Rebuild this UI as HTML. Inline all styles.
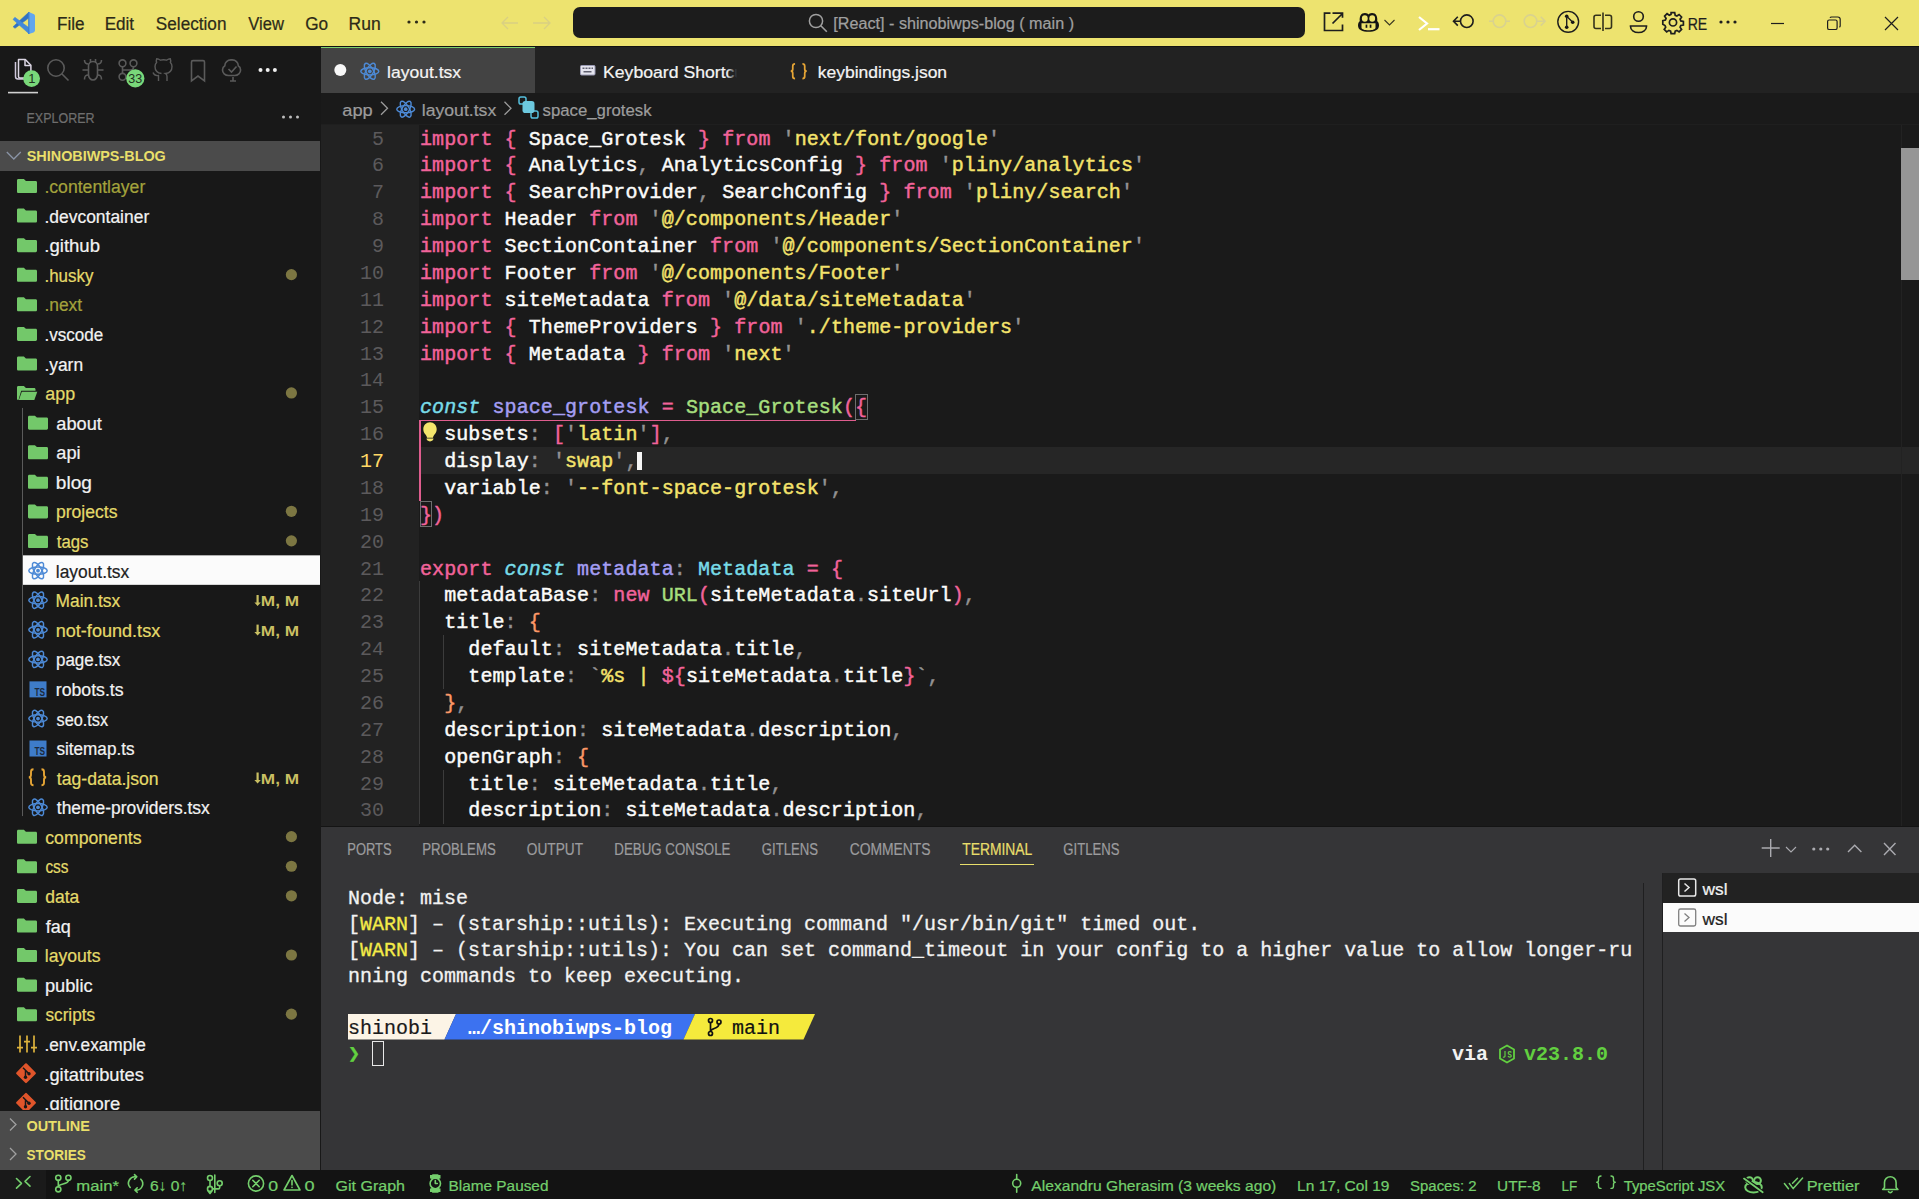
<!DOCTYPE html>
<html><head><meta charset="utf-8"><style>
*{margin:0;padding:0;box-sizing:border-box}
html,body{width:1919px;height:1199px;overflow:hidden;background:#1b1b1b;font-family:"Liberation Sans",sans-serif}
.abs{position:absolute}
svg{overflow:visible}
.ln{position:absolute;left:0;width:62px;text-align:right;font-family:"Liberation Mono",monospace;font-size:20px;color:#5e5c5e;height:27px;line-height:27px}
.cl{position:absolute;left:99px;font-family:"Liberation Mono",monospace;font-size:20px;height:27px;line-height:27px;white-space:pre;color:#fcfcfa;letter-spacing:0.08px;-webkit-text-stroke:0.45px currentColor}
.k{color:#f2639a}.p{color:#939293}.s{color:#f4e36c}.w{color:#fcfcfa}.c{color:#78dce8;font-style:italic}.v{color:#a49ef3}.g{color:#a6de7e}.t{color:#78dce8}.o{color:#fc9867}
.term{position:absolute;left:348px;font-family:"Liberation Mono",monospace;font-size:20px;height:26px;line-height:26px;white-space:pre;color:#f2f2f2;-webkit-text-stroke:0.3px currentColor}
</style></head><body>
<div class="abs" style="left:0px;top:0px;width:1919px;height:46px;background:#ede36f;"></div>
<svg class="abs" style="left:0;top:0" width="46" height="46" viewBox="0 0 46 46">
<path d="M29 12L29 17.8L15 28.3L13.1 26.7z" fill="#2f72c4" stroke="#2f72c4" stroke-width=".6" stroke-linejoin="round"/>
<path d="M14.9 17.3L29 27.8V33.8L13 19.4z" fill="#4389d9" stroke="#4389d9" stroke-width=".6" stroke-linejoin="round"/>
<path d="M28.8 11.9L33.5 13.9C34.4 14.3 35 15 35 16V30.3C35 31.3 34.4 32 33.5 32.4L28.8 34V27.8z" fill="#62a6ee"/>
<path d="M28.8 11.9V34" stroke="#3b7fce" stroke-width="1.2"/>
</svg>
<svg class="abs" style="left:405px;top:18px" width="24" height="8"><g fill="#2c2a18"><circle cx="4" cy="4" r="1.6"/><circle cx="11.5" cy="4" r="1.6"/><circle cx="19" cy="4" r="1.6"/></g></svg>
<svg class="abs" style="left:498px;top:12px" width="60" height="22" viewBox="0 0 60 22">
<path d="M20 11H4M10 5L4 11l6 6" stroke="#d9d083" stroke-width="1.3" fill="none"/>
<path d="M35 11h17M46 5l6 6-6 6" stroke="#d9d083" stroke-width="1.3" fill="none"/>
</svg>
<div class="abs" style="left:573px;top:7px;width:732px;height:31px;background:#1c1c1c;border-radius:7px"></div>
<svg class="abs" style="left:806px;top:12px" width="24" height="22" viewBox="0 0 24 22">
<circle cx="10" cy="9" r="6.6" stroke="#a0a0a0" stroke-width="1.5" fill="none"/><path d="M14.8 13.8l6 6" stroke="#a0a0a0" stroke-width="1.6"/></svg>
<svg class="abs" style="left:0;top:0" width="1919" height="46" viewBox="0 0 1919 46">
<g stroke="#1e1e1e" stroke-width="1.7" fill="none">
<path d="M1330.5 13.2H1324.5V30.5H1342.5V24.5"/><path d="M1332.5 23.5L1342.5 13.5M1332.5 13.2h10v4.5"/>
</g>
<g transform="translate(1357,12)">
<path d="M1 13.5c0-2.5.8-3.6 1.8-4.3C2.2 4.5 4 1 8 1c2 0 3 .8 3.5 1.6C12 1.8 13 1 15 1c4 0 5.8 3.5 5.2 8.2 1 .7 1.8 1.8 1.8 4.3 0 4.5-4.5 6.3-10.5 6.3S1 18 1 13.5z" fill="#141414"/>
<ellipse cx="7.8" cy="6.5" rx="2.9" ry="3.3" fill="#ede36f"/><ellipse cx="15.2" cy="6.5" rx="2.9" ry="3.3" fill="#ede36f"/>
<path d="M4.5 11.2h14v4.3c0 1.8-3 2.8-7 2.8s-7-1-7-2.8z" fill="#ede36f"/>
<rect x="8.6" y="12.6" width="1.7" height="3.2" fill="#141414"/><rect x="12.7" y="12.6" width="1.7" height="3.2" fill="#141414"/>
</g>
<path d="M1384.5 20l5 5 5-5" stroke="#3a3820" stroke-width="1.1" fill="none"/>
<path d="M1419 17l8 6.5-8 6.5" stroke="#ffffff" stroke-width="2.2" fill="none"/><path d="M1428 29.2h11.5" stroke="#ffffff" stroke-width="2.2"/>
<g stroke="#1e1e1e" stroke-width="1.6" fill="none">
<circle cx="1466.8" cy="21.2" r="6.3"/><path d="M1460.5 21.2h-7M1457.8 16.8l-4.3 4.4 4.3 4.4"/>
</g>
<g stroke="#d9d28f" stroke-width="1.6" fill="none">
<circle cx="1499.5" cy="21.2" r="6.3"/><path d="M1489 21.2h4.2M1505.8 21.2h4.2"/>
<circle cx="1530.5" cy="21.2" r="6.3"/><path d="M1536.8 21.2h8.2M1540.8 16.8l4.3 4.4-4.3 4.4"/>
</g>
<circle cx="1568.2" cy="21.8" r="10.4" stroke="#1e1e1e" stroke-width="1.4" fill="none"/>
<g fill="#141414"><circle cx="1566.7" cy="16.3" r="1.8"/><circle cx="1566.7" cy="27.3" r="1.8"/><circle cx="1572.7" cy="22.3" r="1.8"/></g>
<path d="M1566.7 16.3v11M1566.7 16.3l6 6" stroke="#1e1e1e" stroke-width="1.4"/>
<g stroke="#34321c" stroke-width="1.6" fill="none">
<path d="M1601 15.2h-5c-1.2 0-2 .8-2 2v9.3c0 1.2.8 2 2 2h5M1605 15.2h4.5c1.2 0 2 .8 2 2v9.3c0 1.2-.8 2-2 2h-4.5"/><path d="M1603 12.5v18.5"/>
</g>
<g stroke="#1e1e1e" stroke-width="1.6" fill="none">
<circle cx="1638.5" cy="16.5" r="4.8"/><path d="M1630.5 26.5c0 3.5 3.5 6 8 6s8-2.5 8-6v-.5h-16z"/>
</g>
<path fill="none" stroke="#1e1e1e" stroke-width="1.7" transform="translate(1662.5,11.5)" d="M8.6 1.2h3.6l.5 2.6 1.7.7 2.2-1.5 2.5 2.5-1.5 2.2.7 1.7 2.6.5v3.6l-2.6.5-.7 1.7 1.5 2.2-2.5 2.5-2.2-1.5-1.7.7-.5 2.6H8.6l-.5-2.6-1.7-.7-2.2 1.5-2.5-2.5 1.5-2.2-.7-1.7L.3 12.7V9.1l2.6-.5.7-1.7-1.5-2.2 2.5-2.5 2.2 1.5 1.7-.7z" />
<circle cx="1673" cy="22.4" r="3.6" fill="none" stroke="#1e1e1e" stroke-width="1.7"/>
<g fill="#1e1e1e"><circle cx="1721" cy="22" r="1.6"/><circle cx="1728" cy="22" r="1.6"/><circle cx="1735" cy="22" r="1.6"/></g>
<path d="M1771 23.5h13" stroke="#1e1e1e" stroke-width="1.2"/>
<g stroke="#1e1e1e" stroke-width="1.2" fill="none"><rect x="1827.6" y="20" width="9.5" height="9.5" rx="1.6"/><path d="M1830 17.8c.3-.6.8-.8 1.5-.8h6.3c1.5 0 2.4.9 2.4 2.4v6.3c0 .7-.3 1.2-.8 1.5"/></g>
<path d="M1885 17l13 13M1898 17l-13 13" stroke="#1e1e1e" stroke-width="1.2"/>
</svg>
<div class="abs" style="left:0px;top:46px;width:321px;height:1124px;background:#181818;"></div>
<svg class="abs" style="left:0;top:46px" width="320" height="50" viewBox="0 46 320 50">
<g fill="none" stroke-width="1.5" stroke-linejoin="round">
<path d="M15.5 62v14.5c0 1.5 1 2.5 2.5 2.5h10" stroke="#cfc8dc"/>
<path d="M18.5 59.5h6.8l5.6 5.8v11.2c0 .9-.6 1.5-1.5 1.5H20c-.9 0-1.5-.6-1.5-1.5z" stroke="#dcd6e4"/><path d="M25 59.5v6h5.8" stroke="#dcd6e4"/>
</g>
<circle cx="31.6" cy="78.6" r="8.4" fill="#79d87a"/>
<text x="31.8" y="83.2" font-size="13" fill="#223322" text-anchor="middle" font-family="Liberation Sans">1</text>
<rect x="8" y="91.8" width="30" height="1.6" fill="#d0d0d0"/>
<g fill="none" stroke="#5a5a5a" stroke-width="1.6">
<circle cx="56" cy="68" r="8.2"/><path d="M62 74l6.5 6.5"/>
<path d="M88.5 66c0-2.5 2-4.5 4.5-4.5s4.5 2 4.5 4.5v8.5c0 3-2 5.5-4.5 5.5s-4.5-2.5-4.5-5.5z"/>
<path d="M90.5 59v3M95.5 59v3M88.5 70h-6M97.5 70h6M88.5 64c-3 0-4-1-4-4M97.5 64c3 0 4-1 4-4M88.5 75c-3 0-4 1-4 4.5M97.5 75c3 0 4 1 4 4.5"/>
<circle cx="122.5" cy="63.3" r="3.4"/><circle cx="133.5" cy="63.3" r="3.4"/><circle cx="122.5" cy="76.8" r="3.4"/><path d="M122.5 66.7v6.7M122.5 70h8c2 0 3-1 3-3v-.3"/>
<path d="M158.5 81v-5.5c-2.5.5-4.5-.5-5.5-3M167 81v-4.5c0-1.5-.5-2.5-1.5-3 4-.5 6.5-2.5 6.5-7 0-1.7-.6-3-1.6-4 .4-1.3.4-2.7-.1-3.8-1.3 0-2.7.7-3.8 1.5-1.8-.5-4.2-.5-6 0-1.1-.8-2.5-1.5-3.8-1.5-.5 1.1-.5 2.5-.1 3.8-1 1-1.6 2.3-1.6 4 0 4.5 2.5 6.5 6.5 7" stroke-width="1.4"/>
<path d="M191.5 62c0-.8.6-1.4 1.4-1.4h10.2c.8 0 1.4.6 1.4 1.4v19l-6.5-5-6.5 5z"/>
<path d="M233 77v4M230 81h6M228.5 75.5c-3.5 0-6-2.5-6-5.5 0-2 1-3.5 2.3-4.3 0-3.3 2.8-5.8 6-5.8h1.5c3.2 0 6 2.5 6 5.8 1.3.8 2.3 2.3 2.3 4.3 0 3-2.5 5.5-6 5.5z"/><path d="M228.5 69l3 3 5-5.5"/>
</g>
<circle cx="135.3" cy="78.4" r="9.1" fill="#79d87a"/>
<text x="135.3" y="83" font-size="12.5" fill="#223322" text-anchor="middle" font-family="Liberation Sans">33</text>
<g fill="#f0f0f0"><circle cx="260.5" cy="70" r="2"/><circle cx="267.7" cy="70" r="2"/><circle cx="274.9" cy="70" r="2"/></g>
</svg>
<svg class="abs" style="left:280px;top:110px" width="24" height="14"><g fill="#bdbdbd"><circle cx="3.5" cy="7" r="1.5"/><circle cx="10.5" cy="7" r="1.5"/><circle cx="17.5" cy="7" r="1.5"/></g></svg>
<div class="abs" style="left:0px;top:141px;width:320px;height:30px;background:#4b4b4b;"></div>
<svg class="abs" style="left:0;top:141px" width="30" height="30"><path d="M6.8 11l7 7 7-7" stroke="#8a94a6" stroke-width="1.3" fill="none"/></svg>
<div class="abs" style="left:0;top:171px;width:320px;height:939px;overflow:hidden"><svg width="320" height="939" viewBox="0 171 320 939" font-family="Liberation Sans"><rect x="23" y="555.34" width="297" height="29.5" fill="#fbfbfb"/><rect x="22" y="407.94" width="1" height="408.12" fill="#5a5a5a"/><path transform="translate(17,179.00)" d="M0 1.3C0 .6.6 0 1.3 0h5.6l2 1.9h9.8c.7 0 1.3.6 1.3 1.3v9.5c0 .7-.6 1.3-1.3 1.3H1.3C.6 14 0 13.4 0 12.7z" fill="#73c86a"/><text x="44.41" y="193.10" font-size="18" fill="#a3a23c" stroke="#a3a23c" stroke-width="0.22" textLength="100.85" lengthAdjust="spacingAndGlyphs">.contentlayer</text><path transform="translate(17,208.58)" d="M0 1.3C0 .6.6 0 1.3 0h5.6l2 1.9h9.8c.7 0 1.3.6 1.3 1.3v9.5c0 .7-.6 1.3-1.3 1.3H1.3C.6 14 0 13.4 0 12.7z" fill="#73c86a"/><text x="44.43" y="222.68" font-size="18" fill="#f2f2f2" stroke="#f2f2f2" stroke-width="0.22" textLength="104.81" lengthAdjust="spacingAndGlyphs">.devcontainer</text><path transform="translate(17,238.16)" d="M0 1.3C0 .6.6 0 1.3 0h5.6l2 1.9h9.8c.7 0 1.3.6 1.3 1.3v9.5c0 .7-.6 1.3-1.3 1.3H1.3C.6 14 0 13.4 0 12.7z" fill="#73c86a"/><text x="44.33" y="252.26" font-size="18" fill="#f2f2f2" stroke="#f2f2f2" stroke-width="0.22" textLength="55.67" lengthAdjust="spacingAndGlyphs">.github</text><path transform="translate(17,267.74)" d="M0 1.3C0 .6.6 0 1.3 0h5.6l2 1.9h9.8c.7 0 1.3.6 1.3 1.3v9.5c0 .7-.6 1.3-1.3 1.3H1.3C.6 14 0 13.4 0 12.7z" fill="#73c86a"/><text x="44.48" y="281.84" font-size="18" fill="#e4da6a" stroke="#e4da6a" stroke-width="0.22" textLength="48.92" lengthAdjust="spacingAndGlyphs">.husky</text><circle cx="291.4" cy="274.64" r="5.6" fill="#7c7642"/><path transform="translate(17,297.32)" d="M0 1.3C0 .6.6 0 1.3 0h5.6l2 1.9h9.8c.7 0 1.3.6 1.3 1.3v9.5c0 .7-.6 1.3-1.3 1.3H1.3C.6 14 0 13.4 0 12.7z" fill="#73c86a"/><text x="44.43" y="311.42" font-size="18" fill="#a3a23c" stroke="#a3a23c" stroke-width="0.22" textLength="37.70" lengthAdjust="spacingAndGlyphs">.next</text><path transform="translate(17,326.90)" d="M0 1.3C0 .6.6 0 1.3 0h5.6l2 1.9h9.8c.7 0 1.3.6 1.3 1.3v9.5c0 .7-.6 1.3-1.3 1.3H1.3C.6 14 0 13.4 0 12.7z" fill="#73c86a"/><text x="44.47" y="341.00" font-size="18" fill="#f2f2f2" stroke="#f2f2f2" stroke-width="0.22" textLength="58.72" lengthAdjust="spacingAndGlyphs">.vscode</text><path transform="translate(17,356.48)" d="M0 1.3C0 .6.6 0 1.3 0h5.6l2 1.9h9.8c.7 0 1.3.6 1.3 1.3v9.5c0 .7-.6 1.3-1.3 1.3H1.3C.6 14 0 13.4 0 12.7z" fill="#73c86a"/><text x="44.43" y="370.58" font-size="18" fill="#f2f2f2" stroke="#f2f2f2" stroke-width="0.22" textLength="38.66" lengthAdjust="spacingAndGlyphs">.yarn</text><g transform="translate(17,386.06)"><path d="M0 1.3C0 .6.6 0 1.3 0h5.6l2 1.9h8.3c.7 0 1.3.6 1.3 1.3V4.6H4.2L1.5 14H1.3C.6 14 0 13.4 0 12.7z" fill="#73c86a"/><path d="M4.8 5.8H20.3l-3 8.2H1.9z" fill="#73c86a"/></g><text x="45.29" y="400.16" font-size="18" fill="#e4da6a" stroke="#e4da6a" stroke-width="0.22" textLength="29.80" lengthAdjust="spacingAndGlyphs">app</text><circle cx="291.4" cy="392.96" r="5.6" fill="#7c7642"/><path transform="translate(28,415.64)" d="M0 1.3C0 .6.6 0 1.3 0h5.6l2 1.9h9.8c.7 0 1.3.6 1.3 1.3v9.5c0 .7-.6 1.3-1.3 1.3H1.3C.6 14 0 13.4 0 12.7z" fill="#73c86a"/><text x="56.27" y="429.74" font-size="18" fill="#f2f2f2" stroke="#f2f2f2" stroke-width="0.22" textLength="45.55" lengthAdjust="spacingAndGlyphs">about</text><path transform="translate(28,445.22)" d="M0 1.3C0 .6.6 0 1.3 0h5.6l2 1.9h9.8c.7 0 1.3.6 1.3 1.3v9.5c0 .7-.6 1.3-1.3 1.3H1.3C.6 14 0 13.4 0 12.7z" fill="#73c86a"/><text x="56.27" y="459.32" font-size="18" fill="#f2f2f2" stroke="#f2f2f2" stroke-width="0.22" textLength="24.30" lengthAdjust="spacingAndGlyphs">api</text><path transform="translate(28,474.80)" d="M0 1.3C0 .6.6 0 1.3 0h5.6l2 1.9h9.8c.7 0 1.3.6 1.3 1.3v9.5c0 .7-.6 1.3-1.3 1.3H1.3C.6 14 0 13.4 0 12.7z" fill="#73c86a"/><text x="55.85" y="488.90" font-size="18" fill="#f2f2f2" stroke="#f2f2f2" stroke-width="0.22" textLength="36.09" lengthAdjust="spacingAndGlyphs">blog</text><path transform="translate(28,504.38)" d="M0 1.3C0 .6.6 0 1.3 0h5.6l2 1.9h9.8c.7 0 1.3.6 1.3 1.3v9.5c0 .7-.6 1.3-1.3 1.3H1.3C.6 14 0 13.4 0 12.7z" fill="#73c86a"/><text x="55.94" y="518.48" font-size="18" fill="#e4da6a" stroke="#e4da6a" stroke-width="0.22" textLength="61.61" lengthAdjust="spacingAndGlyphs">projects</text><circle cx="291.4" cy="511.28" r="5.6" fill="#7c7642"/><path transform="translate(28,533.96)" d="M0 1.3C0 .6.6 0 1.3 0h5.6l2 1.9h9.8c.7 0 1.3.6 1.3 1.3v9.5c0 .7-.6 1.3-1.3 1.3H1.3C.6 14 0 13.4 0 12.7z" fill="#73c86a"/><text x="56.83" y="548.06" font-size="18" fill="#e4da6a" stroke="#e4da6a" stroke-width="0.22" textLength="31.67" lengthAdjust="spacingAndGlyphs">tags</text><circle cx="291.4" cy="540.86" r="5.6" fill="#7c7642"/><g transform="translate(28,560.64) scale(1.0)"><g fill="none" stroke="#4d8ad6" stroke-width="1.5"><ellipse cx="10" cy="10" rx="9.2" ry="3.7"/><ellipse cx="10" cy="10" rx="9.2" ry="3.7" transform="rotate(60 10 10)"/><ellipse cx="10" cy="10" rx="9.2" ry="3.7" transform="rotate(120 10 10)"/></g><circle cx="10" cy="10" r="1.9" fill="#4d8ad6"/></g><text x="55.78" y="577.64" font-size="18" fill="#1e1e1e" stroke="#1e1e1e" stroke-width="0.22" textLength="73.46" lengthAdjust="spacingAndGlyphs">layout.tsx</text><g transform="translate(28,590.22) scale(1.0)"><g fill="none" stroke="#4d8ad6" stroke-width="1.5"><ellipse cx="10" cy="10" rx="9.2" ry="3.7"/><ellipse cx="10" cy="10" rx="9.2" ry="3.7" transform="rotate(60 10 10)"/><ellipse cx="10" cy="10" rx="9.2" ry="3.7" transform="rotate(120 10 10)"/></g><circle cx="10" cy="10" r="1.9" fill="#4d8ad6"/></g><text x="55.61" y="607.22" font-size="18" fill="#e4da6a" stroke="#e4da6a" stroke-width="0.22" textLength="64.61" lengthAdjust="spacingAndGlyphs">Main.tsx</text><text x="260.79" y="606.02" font-size="15.5" fill="#c9bf62" font-weight="bold" textLength="38.27" lengthAdjust="spacingAndGlyphs">M, M</text><path d="M257.6 595.02v8.5" stroke="#c9bf62" stroke-width="2.2"/><path d="M254.4 602.42h6.4l-3.2 3.6z" fill="#c9bf62"/><g transform="translate(28,619.80) scale(1.0)"><g fill="none" stroke="#4d8ad6" stroke-width="1.5"><ellipse cx="10" cy="10" rx="9.2" ry="3.7"/><ellipse cx="10" cy="10" rx="9.2" ry="3.7" transform="rotate(60 10 10)"/><ellipse cx="10" cy="10" rx="9.2" ry="3.7" transform="rotate(120 10 10)"/></g><circle cx="10" cy="10" r="1.9" fill="#4d8ad6"/></g><text x="55.74" y="636.80" font-size="18" fill="#e4da6a" stroke="#e4da6a" stroke-width="0.22" textLength="104.46" lengthAdjust="spacingAndGlyphs">not-found.tsx</text><text x="260.79" y="635.60" font-size="15.5" fill="#c9bf62" font-weight="bold" textLength="38.27" lengthAdjust="spacingAndGlyphs">M, M</text><path d="M257.6 624.60v8.5" stroke="#c9bf62" stroke-width="2.2"/><path d="M254.4 632.00h6.4l-3.2 3.6z" fill="#c9bf62"/><g transform="translate(28,649.38) scale(1.0)"><g fill="none" stroke="#4d8ad6" stroke-width="1.5"><ellipse cx="10" cy="10" rx="9.2" ry="3.7"/><ellipse cx="10" cy="10" rx="9.2" ry="3.7" transform="rotate(60 10 10)"/><ellipse cx="10" cy="10" rx="9.2" ry="3.7" transform="rotate(120 10 10)"/></g><circle cx="10" cy="10" r="1.9" fill="#4d8ad6"/></g><text x="55.98" y="666.38" font-size="18" fill="#f2f2f2" stroke="#f2f2f2" stroke-width="0.22" textLength="64.19" lengthAdjust="spacingAndGlyphs">page.tsx</text><g transform="translate(29.5,681.36)"><rect x="0" y="0" width="17" height="16" fill="#3e7cc9"/><text x="5" y="14.4" font-size="10.8" font-weight="bold" fill="#1c2a3c" font-family="Liberation Sans" textLength="10.6" lengthAdjust="spacingAndGlyphs">TS</text></g><text x="55.76" y="695.96" font-size="18" fill="#f2f2f2" stroke="#f2f2f2" stroke-width="0.22" textLength="67.85" lengthAdjust="spacingAndGlyphs">robots.ts</text><g transform="translate(28,708.54) scale(1.0)"><g fill="none" stroke="#4d8ad6" stroke-width="1.5"><ellipse cx="10" cy="10" rx="9.2" ry="3.7"/><ellipse cx="10" cy="10" rx="9.2" ry="3.7" transform="rotate(60 10 10)"/><ellipse cx="10" cy="10" rx="9.2" ry="3.7" transform="rotate(120 10 10)"/></g><circle cx="10" cy="10" r="1.9" fill="#4d8ad6"/></g><text x="56.51" y="725.54" font-size="18" fill="#f2f2f2" stroke="#f2f2f2" stroke-width="0.22" textLength="51.62" lengthAdjust="spacingAndGlyphs">seo.tsx</text><g transform="translate(29.5,740.52)"><rect x="0" y="0" width="17" height="16" fill="#3e7cc9"/><text x="5" y="14.4" font-size="10.8" font-weight="bold" fill="#1c2a3c" font-family="Liberation Sans" textLength="10.6" lengthAdjust="spacingAndGlyphs">TS</text></g><text x="56.49" y="755.12" font-size="18" fill="#f2f2f2" stroke="#f2f2f2" stroke-width="0.22" textLength="77.97" lengthAdjust="spacingAndGlyphs">sitemap.ts</text><g transform="translate(28,767.70) scale(1.0)" fill="none" stroke="#e6a535" stroke-width="1.9"><path d="M5.5 1.5C3.6 1.5 3 2.5 3 4v3c0 1.3-.9 2.5-2.2 2.5C2.1 9.5 3 10.7 3 12v3c0 1.5.6 2.5 2.5 2.5"/><path d="M13.5 1.5c1.9 0 2.5 1 2.5 2.5v3c0 1.3.9 2.5 2.2 2.5-1.3 0-2.2 1.2-2.2 2.5v3c0 1.5-.6 2.5-2.5 2.5"/></g><text x="56.82" y="784.70" font-size="18" fill="#e4da6a" stroke="#e4da6a" stroke-width="0.22" textLength="101.86" lengthAdjust="spacingAndGlyphs">tag-data.json</text><text x="260.79" y="783.50" font-size="15.5" fill="#c9bf62" font-weight="bold" textLength="38.27" lengthAdjust="spacingAndGlyphs">M, M</text><path d="M257.6 772.50v8.5" stroke="#c9bf62" stroke-width="2.2"/><path d="M254.4 779.90h6.4l-3.2 3.6z" fill="#c9bf62"/><g transform="translate(28,797.28) scale(1.0)"><g fill="none" stroke="#4d8ad6" stroke-width="1.5"><ellipse cx="10" cy="10" rx="9.2" ry="3.7"/><ellipse cx="10" cy="10" rx="9.2" ry="3.7" transform="rotate(60 10 10)"/><ellipse cx="10" cy="10" rx="9.2" ry="3.7" transform="rotate(120 10 10)"/></g><circle cx="10" cy="10" r="1.9" fill="#4d8ad6"/></g><text x="56.83" y="814.28" font-size="18" fill="#f2f2f2" stroke="#f2f2f2" stroke-width="0.22" textLength="152.95" lengthAdjust="spacingAndGlyphs">theme-providers.tsx</text><path transform="translate(17,829.76)" d="M0 1.3C0 .6.6 0 1.3 0h5.6l2 1.9h9.8c.7 0 1.3.6 1.3 1.3v9.5c0 .7-.6 1.3-1.3 1.3H1.3C.6 14 0 13.4 0 12.7z" fill="#73c86a"/><text x="45.29" y="843.86" font-size="18" fill="#e4da6a" stroke="#e4da6a" stroke-width="0.22" textLength="96.19" lengthAdjust="spacingAndGlyphs">components</text><circle cx="291.4" cy="836.66" r="5.6" fill="#7c7642"/><path transform="translate(17,859.34)" d="M0 1.3C0 .6.6 0 1.3 0h5.6l2 1.9h9.8c.7 0 1.3.6 1.3 1.3v9.5c0 .7-.6 1.3-1.3 1.3H1.3C.6 14 0 13.4 0 12.7z" fill="#73c86a"/><text x="45.38" y="873.44" font-size="18" fill="#e4da6a" stroke="#e4da6a" stroke-width="0.22" textLength="23.08" lengthAdjust="spacingAndGlyphs">css</text><circle cx="291.4" cy="866.24" r="5.6" fill="#7c7642"/><path transform="translate(17,888.92)" d="M0 1.3C0 .6.6 0 1.3 0h5.6l2 1.9h9.8c.7 0 1.3.6 1.3 1.3v9.5c0 .7-.6 1.3-1.3 1.3H1.3C.6 14 0 13.4 0 12.7z" fill="#73c86a"/><text x="45.30" y="903.02" font-size="18" fill="#e4da6a" stroke="#e4da6a" stroke-width="0.22" textLength="34.03" lengthAdjust="spacingAndGlyphs">data</text><circle cx="291.4" cy="895.82" r="5.6" fill="#7c7642"/><path transform="translate(17,918.50)" d="M0 1.3C0 .6.6 0 1.3 0h5.6l2 1.9h9.8c.7 0 1.3.6 1.3 1.3v9.5c0 .7-.6 1.3-1.3 1.3H1.3C.6 14 0 13.4 0 12.7z" fill="#73c86a"/><text x="45.82" y="932.60" font-size="18" fill="#f2f2f2" stroke="#f2f2f2" stroke-width="0.22" textLength="25.04" lengthAdjust="spacingAndGlyphs">faq</text><path transform="translate(17,948.08)" d="M0 1.3C0 .6.6 0 1.3 0h5.6l2 1.9h9.8c.7 0 1.3.6 1.3 1.3v9.5c0 .7-.6 1.3-1.3 1.3H1.3C.6 14 0 13.4 0 12.7z" fill="#73c86a"/><text x="44.77" y="962.18" font-size="18" fill="#e4da6a" stroke="#e4da6a" stroke-width="0.22" textLength="55.73" lengthAdjust="spacingAndGlyphs">layouts</text><circle cx="291.4" cy="954.98" r="5.6" fill="#7c7642"/><path transform="translate(17,977.66)" d="M0 1.3C0 .6.6 0 1.3 0h5.6l2 1.9h9.8c.7 0 1.3.6 1.3 1.3v9.5c0 .7-.6 1.3-1.3 1.3H1.3C.6 14 0 13.4 0 12.7z" fill="#73c86a"/><text x="44.90" y="991.76" font-size="18" fill="#f2f2f2" stroke="#f2f2f2" stroke-width="0.22" textLength="47.69" lengthAdjust="spacingAndGlyphs">public</text><path transform="translate(17,1007.24)" d="M0 1.3C0 .6.6 0 1.3 0h5.6l2 1.9h9.8c.7 0 1.3.6 1.3 1.3v9.5c0 .7-.6 1.3-1.3 1.3H1.3C.6 14 0 13.4 0 12.7z" fill="#73c86a"/><text x="45.48" y="1021.34" font-size="18" fill="#e4da6a" stroke="#e4da6a" stroke-width="0.22" textLength="49.61" lengthAdjust="spacingAndGlyphs">scripts</text><circle cx="291.4" cy="1014.14" r="5.6" fill="#7c7642"/><g transform="translate(17,1035.62)" stroke="#dcb23c" stroke-width="1.7" fill="none"><path d="M3 0v17M10 0v17M17 0v17M0 12h6M7 6h6M14 12h6"/></g><text x="44.45" y="1050.92" font-size="18" fill="#f2f2f2" stroke="#f2f2f2" stroke-width="0.22" textLength="101.30" lengthAdjust="spacingAndGlyphs">.env.example</text><g transform="translate(16,1063.20)"><path d="M10 1.2l8.8 8.8-8.8 8.8L1.2 10z" fill="#e0552b" stroke="#e0552b" stroke-width="2.2" stroke-linejoin="round"/><g stroke="#181818" stroke-width="1.5" fill="none"><path d="M7 4.5l6 6M9.5 7v7"/></g><g fill="#181818"><circle cx="9.5" cy="14" r="1.7"/><circle cx="13" cy="10.5" r="1.7"/></g></g><text x="44.36" y="1080.50" font-size="18" fill="#f2f2f2" stroke="#f2f2f2" stroke-width="0.22" textLength="99.54" lengthAdjust="spacingAndGlyphs">.gitattributes</text><g transform="translate(16,1092.78)"><path d="M10 1.2l8.8 8.8-8.8 8.8L1.2 10z" fill="#e0552b" stroke="#e0552b" stroke-width="2.2" stroke-linejoin="round"/><g stroke="#181818" stroke-width="1.5" fill="none"><path d="M7 4.5l6 6M9.5 7v7"/></g><g fill="#181818"><circle cx="9.5" cy="14" r="1.7"/><circle cx="13" cy="10.5" r="1.7"/></g></g><text x="44.34" y="1110.08" font-size="18" fill="#f2f2f2" stroke="#f2f2f2" stroke-width="0.22" textLength="75.86" lengthAdjust="spacingAndGlyphs">.gitignore</text></svg></div>
<div class="abs" style="left:0px;top:1111px;width:320px;height:29px;background:#4b4b4b;"></div>
<div class="abs" style="left:0px;top:1140px;width:320px;height:30px;background:#4b4b4b;"></div>
<svg class="abs" style="left:0;top:1110px" width="30" height="60"><path d="M10 8.5l6 6-6 6M10 38l6 6-6 6" stroke="#a0a0a0" stroke-width="1.3" fill="none"/></svg>
<div class="abs" style="left:321px;top:46px;width:1598px;height:780px;background:#1a1a1a;"></div>
<div class="abs" style="left:321px;top:46px;width:1598px;height:47px;background:#222222;"></div>
<div class="abs" style="left:321px;top:46px;width:1598px;height:1px;background:#121212;"></div>
<div class="abs" style="left:321px;top:48px;width:214px;height:45px;background:#434343;"></div>
<div class="abs" style="left:321px;top:47px;width:214px;height:1.2px;background:#7bd06c;"></div>
<svg class="abs" style="left:321px;top:46px" width="700" height="80" viewBox="321 46 700 80"><circle cx="340.3" cy="70" r="6" fill="#f8f8f8"/><g transform="translate(360,61.5) scale(0.98)"><g fill="none" stroke="#4d8ad6" stroke-width="1.5"><ellipse cx="10" cy="10" rx="9.2" ry="3.7"/><ellipse cx="10" cy="10" rx="9.2" ry="3.7" transform="rotate(60 10 10)"/><ellipse cx="10" cy="10" rx="9.2" ry="3.7" transform="rotate(120 10 10)"/></g><circle cx="10" cy="10" r="1.9" fill="#4d8ad6"/></g><g transform="translate(580,65)"><rect x="0.5" y="0.5" width="14.5" height="9.5" rx="1" fill="#e4e4ee" stroke="#9a9ab4"/><g fill="#606070"><rect x="2.5" y="2.5" width="2" height="1.5"/><rect x="5.5" y="2.5" width="2" height="1.5"/><rect x="8.5" y="2.5" width="2" height="1.5"/><rect x="11.5" y="2.5" width="1.5" height="1.5"/><rect x="3.5" y="6" width="8" height="1.5"/></g></g><g transform="translate(790,62.5) scale(0.92)" fill="none" stroke="#e6a535" stroke-width="1.9"><path d="M5.5 1.5C3.6 1.5 3 2.5 3 4v3c0 1.3-.9 2.5-2.2 2.5C2.1 9.5 3 10.7 3 12v3c0 1.5.6 2.5 2.5 2.5"/><path d="M13.5 1.5c1.9 0 2.5 1 2.5 2.5v3c0 1.3.9 2.5 2.2 2.5-1.3 0-2.2 1.2-2.2 2.5v3c0 1.5-.6 2.5-2.5 2.5"/></g><g transform="translate(396,99.5) scale(0.97)"><g fill="none" stroke="#4d8ad6" stroke-width="1.5"><ellipse cx="10" cy="10" rx="9.2" ry="3.7"/><ellipse cx="10" cy="10" rx="9.2" ry="3.7" transform="rotate(60 10 10)"/><ellipse cx="10" cy="10" rx="9.2" ry="3.7" transform="rotate(120 10 10)"/></g><circle cx="10" cy="10" r="1.9" fill="#4d8ad6"/></g><path d="M381 101.8l6.5 6.5-6.5 6.5M504.5 101.8l6.5 6.5-6.5 6.5" stroke="#9c9c9c" stroke-width="1.3" fill="none"/><g transform="translate(518,96)"><rect x="1" y="1" width="7" height="7" rx="1.8" fill="none" stroke="#55c0de" stroke-width="1.5"/><rect x="13" y="15" width="7" height="7" rx="1.8" fill="none" stroke="#55c0de" stroke-width="1.5"/><rect x="4.5" y="5" width="12" height="12" rx="2.8" fill="#6cc8de"/></g></svg>
<div class="abs" style="left:600px;top:56px;width:137px;height:30px;overflow:hidden"><svg width="137" height="30" viewBox="600 56 137 30" font-family="Liberation Sans"><text x="602.99" y="77.50" font-size="17.2" fill="#f4f4f4" stroke="#f4f4f4" stroke-width="0.22" textLength="154.98" lengthAdjust="spacingAndGlyphs">Keyboard Shortcuts</text></svg></div>
<div class="abs" style="left:727px;top:56px;width:10px;height:30px;background:linear-gradient(90deg,rgba(34,34,34,0),#222)"></div>
<div class="abs" style="left:321px;top:124px;width:98px;height:702px;background:#222222;"></div>
<div class="abs" style="left:321px;top:124px;width:1598px;height:1px;background:#1f1f1f;"></div>
<div class="abs" style="left:321px;top:124px;width:1598px;height:702px;overflow:hidden">
<div class="abs" style="left:99px;top:323.00px;width:1499px;height:26.88px;background:#262626"></div>
<div class="abs" style="left:98px;top:457.38px;width:1.2px;height:27.38px;background:#3c3c3c"></div>
<div class="abs" style="left:98px;top:484.25px;width:1.2px;height:27.38px;background:#3c3c3c"></div>
<div class="abs" style="left:98px;top:511.12px;width:1.2px;height:27.38px;background:#3c3c3c"></div>
<div class="abs" style="left:98px;top:538.00px;width:1.2px;height:27.38px;background:#3c3c3c"></div>
<div class="abs" style="left:98px;top:564.88px;width:1.2px;height:27.38px;background:#3c3c3c"></div>
<div class="abs" style="left:98px;top:591.75px;width:1.2px;height:27.38px;background:#3c3c3c"></div>
<div class="abs" style="left:98px;top:618.62px;width:1.2px;height:27.38px;background:#3c3c3c"></div>
<div class="abs" style="left:98px;top:645.50px;width:1.2px;height:27.38px;background:#3c3c3c"></div>
<div class="abs" style="left:98px;top:672.38px;width:1.2px;height:27.38px;background:#3c3c3c"></div>
<div class="abs" style="left:122px;top:511.12px;width:1.2px;height:27.38px;background:#3c3c3c"></div>
<div class="abs" style="left:122px;top:538.00px;width:1.2px;height:27.38px;background:#3c3c3c"></div>
<div class="abs" style="left:122px;top:645.50px;width:1.2px;height:27.38px;background:#3c3c3c"></div>
<div class="abs" style="left:122px;top:672.38px;width:1.2px;height:27.38px;background:#3c3c3c"></div>
<div class="abs" style="left:98px;top:295.73px;width:437px;height:1.5px;background:#df5d8e"></div>
<div class="abs" style="left:98px;top:295.73px;width:1.5px;height:81.03px;background:#df5d8e"></div>
<div class="abs" style="left:534px;top:269.55px;width:12.5px;height:26px;border:1px solid #6e6e6e"></div>
<div class="abs" style="left:98.5px;top:377.05px;width:12px;height:26px;border:1px solid #6e6e6e"></div>
<div class="ln" style="top:1.50px;left:1px;color:#5c5a5c">5</div>
<div class="cl" style="top:1.50px"><span class="k">import</span> <span class="k">{</span> <span class="w">Space_Grotesk</span> <span class="k">}</span> <span class="k">from</span> <span class="p">&#x27;</span><span class="s">next/font/google</span><span class="p">&#x27;</span></div>
<div class="ln" style="top:28.38px;left:1px;color:#5c5a5c">6</div>
<div class="cl" style="top:28.38px"><span class="k">import</span> <span class="k">{</span> <span class="w">Analytics</span><span class="p">,</span> <span class="w">AnalyticsConfig</span> <span class="k">}</span> <span class="k">from</span> <span class="p">&#x27;</span><span class="s">pliny/analytics</span><span class="p">&#x27;</span></div>
<div class="ln" style="top:55.25px;left:1px;color:#5c5a5c">7</div>
<div class="cl" style="top:55.25px"><span class="k">import</span> <span class="k">{</span> <span class="w">SearchProvider</span><span class="p">,</span> <span class="w">SearchConfig</span> <span class="k">}</span> <span class="k">from</span> <span class="p">&#x27;</span><span class="s">pliny/search</span><span class="p">&#x27;</span></div>
<div class="ln" style="top:82.12px;left:1px;color:#5c5a5c">8</div>
<div class="cl" style="top:82.12px"><span class="k">import</span> <span class="w">Header</span> <span class="k">from</span> <span class="p">&#x27;</span><span class="s">@/components/Header</span><span class="p">&#x27;</span></div>
<div class="ln" style="top:109.00px;left:1px;color:#5c5a5c">9</div>
<div class="cl" style="top:109.00px"><span class="k">import</span> <span class="w">SectionContainer</span> <span class="k">from</span> <span class="p">&#x27;</span><span class="s">@/components/SectionContainer</span><span class="p">&#x27;</span></div>
<div class="ln" style="top:135.88px;left:1px;color:#5c5a5c">10</div>
<div class="cl" style="top:135.88px"><span class="k">import</span> <span class="w">Footer</span> <span class="k">from</span> <span class="p">&#x27;</span><span class="s">@/components/Footer</span><span class="p">&#x27;</span></div>
<div class="ln" style="top:162.75px;left:1px;color:#5c5a5c">11</div>
<div class="cl" style="top:162.75px"><span class="k">import</span> <span class="w">siteMetadata</span> <span class="k">from</span> <span class="p">&#x27;</span><span class="s">@/data/siteMetadata</span><span class="p">&#x27;</span></div>
<div class="ln" style="top:189.62px;left:1px;color:#5c5a5c">12</div>
<div class="cl" style="top:189.62px"><span class="k">import</span> <span class="k">{</span> <span class="w">ThemeProviders</span> <span class="k">}</span> <span class="k">from</span> <span class="p">&#x27;</span><span class="s">./theme-providers</span><span class="p">&#x27;</span></div>
<div class="ln" style="top:216.50px;left:1px;color:#5c5a5c">13</div>
<div class="cl" style="top:216.50px"><span class="k">import</span> <span class="k">{</span> <span class="w">Metadata</span> <span class="k">}</span> <span class="k">from</span> <span class="p">&#x27;</span><span class="s">next</span><span class="p">&#x27;</span></div>
<div class="ln" style="top:243.38px;left:1px;color:#5c5a5c">14</div>
<div class="cl" style="top:243.38px"></div>
<div class="ln" style="top:270.25px;left:1px;color:#5c5a5c">15</div>
<div class="cl" style="top:270.25px"><span class="c">const</span> <span class="v">space_grotesk</span> <span class="k">=</span> <span class="g">Space_Grotesk</span><span class="k">(</span><span class="k">{</span></div>
<div class="ln" style="top:297.12px;left:1px;color:#5c5a5c">16</div>
<div class="cl" style="top:297.12px">  <span class="w">subsets</span><span class="p">:</span> <span class="k">[</span><span class="p">&#x27;</span><span class="s">latin</span><span class="p">&#x27;</span><span class="k">]</span><span class="p">,</span></div>
<div class="ln" style="top:324.00px;left:1px;color:#ffd866">17</div>
<div class="cl" style="top:324.00px">  <span class="w">display</span><span class="p">:</span> <span class="p">&#x27;</span><span class="s">swap</span><span class="p">&#x27;</span><span class="p">,</span></div>
<div class="ln" style="top:350.88px;left:1px;color:#5c5a5c">18</div>
<div class="cl" style="top:350.88px">  <span class="w">variable</span><span class="p">:</span> <span class="p">&#x27;</span><span class="s">--font-space-grotesk</span><span class="p">&#x27;</span><span class="p">,</span></div>
<div class="ln" style="top:377.75px;left:1px;color:#5c5a5c">19</div>
<div class="cl" style="top:377.75px"><span class="k">}</span><span class="k">)</span></div>
<div class="ln" style="top:404.62px;left:1px;color:#5c5a5c">20</div>
<div class="cl" style="top:404.62px"></div>
<div class="ln" style="top:431.50px;left:1px;color:#5c5a5c">21</div>
<div class="cl" style="top:431.50px"><span class="k">export</span> <span class="c">const</span> <span class="v">metadata</span><span class="p">:</span> <span class="t">Metadata</span> <span class="k">=</span> <span class="k">{</span></div>
<div class="ln" style="top:458.38px;left:1px;color:#5c5a5c">22</div>
<div class="cl" style="top:458.38px">  <span class="w">metadataBase</span><span class="p">:</span> <span class="k">new</span> <span class="g">URL</span><span class="k">(</span><span class="w">siteMetadata</span><span class="p">.</span><span class="w">siteUrl</span><span class="k">)</span><span class="p">,</span></div>
<div class="ln" style="top:485.25px;left:1px;color:#5c5a5c">23</div>
<div class="cl" style="top:485.25px">  <span class="w">title</span><span class="p">:</span> <span class="o">{</span></div>
<div class="ln" style="top:512.12px;left:1px;color:#5c5a5c">24</div>
<div class="cl" style="top:512.12px">    <span class="w">default</span><span class="p">:</span> <span class="w">siteMetadata</span><span class="p">.</span><span class="w">title</span><span class="p">,</span></div>
<div class="ln" style="top:539.00px;left:1px;color:#5c5a5c">25</div>
<div class="cl" style="top:539.00px">    <span class="w">template</span><span class="p">:</span> <span class="p">`</span><span class="s">%s |</span> <span class="k">$</span><span class="k">{</span><span class="w">siteMetadata</span><span class="p">.</span><span class="w">title</span><span class="k">}</span><span class="p">`</span><span class="p">,</span></div>
<div class="ln" style="top:565.88px;left:1px;color:#5c5a5c">26</div>
<div class="cl" style="top:565.88px">  <span class="o">}</span><span class="p">,</span></div>
<div class="ln" style="top:592.75px;left:1px;color:#5c5a5c">27</div>
<div class="cl" style="top:592.75px">  <span class="w">description</span><span class="p">:</span> <span class="w">siteMetadata</span><span class="p">.</span><span class="w">description</span><span class="p">,</span></div>
<div class="ln" style="top:619.62px;left:1px;color:#5c5a5c">28</div>
<div class="cl" style="top:619.62px">  <span class="w">openGraph</span><span class="p">:</span> <span class="o">{</span></div>
<div class="ln" style="top:646.50px;left:1px;color:#5c5a5c">29</div>
<div class="cl" style="top:646.50px">    <span class="w">title</span><span class="p">:</span> <span class="w">siteMetadata</span><span class="p">.</span><span class="w">title</span><span class="p">,</span></div>
<div class="ln" style="top:673.38px;left:1px;color:#5c5a5c">30</div>
<div class="cl" style="top:673.38px">    <span class="w">description</span><span class="p">:</span> <span class="w">siteMetadata</span><span class="p">.</span><span class="w">description</span><span class="p">,</span></div>
<svg class="abs" style="left:102px;top:297.52px" width="14" height="20" viewBox="0 0 14 20"><path d="M7 .3C3.2.3.3 3.3.3 7.2c0 2.4 1.2 4.2 2.4 5.6.8 1 1.2 1.9 1.3 3h6c.1-1.1.5-2 1.3-3 1.2-1.4 2.4-3.2 2.4-5.6C13.7 3.3 10.8.3 7 .3z" fill="#f3e56c"/><path d="M3.5 16.6h7c0 1.6-1.5 2.8-3.5 2.8s-3.5-1.2-3.5-2.8z" fill="#f3e56c"/></svg>
<div class="abs" style="left:315.5px;top:328.00px;width:5px;height:18px;background:#f5f5f5"></div>
</div>
<div class="abs" style="left:1901px;top:125px;width:1px;height:701px;background:#222222;"></div>
<div class="abs" style="left:1901px;top:148px;width:18px;height:132px;background:#969696;"></div>
<div class="abs" style="left:321px;top:826px;width:1598px;height:344px;background:#353537;"></div>
<div class="abs" style="left:321px;top:826px;width:1598px;height:1px;background:#141414;"></div>
<div class="abs" style="left:960px;top:863.5px;width:74px;height:1.8px;background:#e8de6b;"></div>
<svg class="abs" style="left:0;top:0" width="1919" height="1199" viewBox="0 0 1919 1199">
<g stroke="#ababb0" stroke-width="1.4" fill="none">
<path d="M1770.7 839v18M1761.7 848h18"/><path d="M1786 847l5 5 5-5" stroke-width="1.1"/>
<path d="M1848 852l6.7-6.7 6.7 6.7"/><path d="M1884 843l11.5 12M1895.5 843l-11.5 12"/>
</g>
<g fill="#ababb0"><circle cx="1813.8" cy="849" r="1.6"/><circle cx="1820.8" cy="849" r="1.6"/><circle cx="1827.7" cy="849" r="1.6"/></g>
</svg>
<div class="term" style="top:885.5px;">Node: mise</div>
<div class="term" style="top:911.5px;">[<span style="color:#f3ea48">WARN</span>] &#8211; (starship::utils): Executing command "/usr/bin/git" timed out.</div>
<div class="term" style="top:937.5px;">[<span style="color:#f3ea48">WARN</span>] &#8211; (starship::utils): You can set command_timeout in your config to a higher value to allow longer-ru</div>
<div class="term" style="top:963.5px;">nning commands to keep executing.</div>
<svg class="abs" style="left:348px;top:1014px" width="470" height="26" viewBox="0 0 470 26">
<path d="M0 0H108L96.5 25.5H0z" fill="#fcf4e6"/>
<path d="M108 0H347L335.5 25.5H96.5z" fill="#3c72f0"/>
<path d="M347 0H467L455.5 25.5H335.5z" fill="#f5ea3c"/>
</svg>
<div class="term" style="top:1015.5px;color:#1a1a1a;-webkit-text-stroke:0.2px #1a1a1a">shinobi</div>
<div class="term" style="top:1015.5px;left:468px;color:#ffffff;font-weight:bold;-webkit-text-stroke:0">&#8230;/shinobiwps-blog</div>
<svg class="abs" style="left:706px;top:1017px" width="18" height="20" viewBox="0 0 18 20"><g stroke="#111" stroke-width="1.7" fill="none"><circle cx="4.5" cy="3.5" r="2"/><circle cx="4.5" cy="16.5" r="2"/><circle cx="13" cy="5" r="2"/><path d="M4.5 5.5v9M13 7c0 5-8.5 4-8.5 7.5"/></g></svg>
<div class="term" style="top:1015.5px;left:732px;color:#111;-webkit-text-stroke:0.2px #111">main</div>
<div class="term" style="top:1041.5px;color:#62d040;font-weight:bold">&#10095;</div>
<div class="abs" style="left:372px;top:1041px;width:12px;height:25px;border:1.6px solid #e8e8e8"></div>
<div class="term" style="top:1041.5px;left:1452px;font-weight:bold;-webkit-text-stroke:0">via</div>
<svg class="abs" style="left:1498px;top:1044px" width="18" height="20" viewBox="0 0 18 20"><path d="M9 1.5l7 4v9l-7 4-7-4v-9z" fill="none" stroke="#62d040" stroke-width="1.8"/><path d="M7 7v5c0 1-1 1.5-2 1M10 12c.5 1 1.5 1.3 2.5 1 1-.3 1-1.8 0-2.3l-1.5-.6c-1-.5-1-2 0-2.3 1-.2 2 .1 2.3.8" fill="none" stroke="#62d040" stroke-width="1.2"/></svg>
<div class="term" style="top:1041.5px;left:1524px;color:#62d040;font-weight:bold;-webkit-text-stroke:0">v23.8.0</div>
<div class="abs" style="left:1643px;top:883px;width:1.2px;height:287px;background:#1f1f20;"></div>
<div class="abs" style="left:1662px;top:873px;width:257px;height:30px;background:#222222;"></div>
<div class="abs" style="left:1662px;top:903px;width:257px;height:29px;background:#fbfbfb;"></div>
<div class="abs" style="left:1662px;top:873px;width:1.2px;height:297px;background:#1f1f20;"></div>
<svg class="abs" style="left:1677px;top:877px" width="22" height="52" viewBox="0 0 22 52"><rect x="1.7" y="2" width="17" height="17" rx="1.8" fill="none" stroke="#e8e8e8" stroke-width="1.5"/><path d="M7.5 6.5l4.5 4-4.5 4" stroke="#e8e8e8" stroke-width="1.5" fill="none"/><rect x="1.7" y="32" width="17" height="17" rx="1.8" fill="none" stroke="#808080" stroke-width="1.3"/><path d="M7.5 36.5l4.5 4-4.5 4" stroke="#808080" stroke-width="1.3" fill="none"/></svg>
<div class="abs" style="left:0px;top:1170px;width:1919px;height:29px;background:#131313;"></div>
<div class="abs" style="left:0px;top:1170px;width:46px;height:29px;background:#1a1a1a;"></div>
<svg class="abs" style="left:0;top:0" width="1919" height="1199" viewBox="0 0 1919 1199">
<g stroke="#74cf6c" stroke-width="1.6" fill="none" stroke-linecap="round" stroke-linejoin="round">
<path d="M16.5 1178.5l5 4.8-5 4.8M30 1176.5l-5 4.8 5 4.8"/>
<circle cx="58.3" cy="1177.8" r="2.6"/><circle cx="58.3" cy="1189.3" r="2.6"/><circle cx="68.4" cy="1177.8" r="2.6"/><path d="M58.3 1180.4v6.3M68.4 1180.4c0 4-10 3-10 6.3"/>
<path d="M130.2 1187.5a6.4 6.4 0 0 1 6-10.6M140.8 1179.2a6.4 6.4 0 0 1-5.2 10.9"/><path d="M134.5 1174.6l2.3 2.2-2.3 2.3M137.2 1187.8l-2.2 2.3 2.2 2.2"/>
<path d="M214.8 1175v17.5"/><circle cx="210" cy="1178" r="2.5"/><circle cx="210" cy="1188.9" r="2.5"/><circle cx="219.7" cy="1183.2" r="2.5"/><path d="M210 1180.5v5.9M219.7 1185.7v1.8c0 .9-.6 1.4-1.4 1.4h-5.8"/><path d="M208.5 1191.5l1.5 2 1.5-2"/>
<circle cx="256" cy="1183.5" r="7.6"/><path d="M252.8 1180.3l6.4 6.4M259.2 1180.3l-6.4 6.4"/>
<path d="M292 1175.5l8 14.5h-16z"/><path d="M292 1180.5v4.5M292 1187.2v.3"/>
<circle cx="435.3" cy="1183.5" r="5.2"/><path d="M432 1178.5l.8-3.5h5l.8 3.5M432 1188.5l.8 3.5h5l.8-3.5M435.3 1180.5v3h2"/>
<circle cx="1016.7" cy="1183.3" r="4"/><path d="M1016.7 1174.5v4.8M1016.7 1187.3v5"/>
<path d="M1601 1176c-2 0-2.5 1-2.5 2.2v2c0 1-.6 2-1.8 2 1.2 0 1.8 1 1.8 2v2c0 1.2.5 2.2 2.5 2.2M1611 1176c2 0 2.5 1 2.5 2.2v2c0 1 .6 2 1.8 2-1.2 0-1.8 1-1.8 2v2c0 1.2-.5 2.2-2.5 2.2" stroke-width="1.4"/>
<ellipse cx="1753.5" cy="1187.3" rx="8.3" ry="5.2" stroke-width="2"/><circle cx="1757.5" cy="1180.6" r="3.4" stroke-width="2"/><circle cx="1749.5" cy="1180.6" r="3.4" stroke-width="2"/><path d="M1743 1177.5l20.5 15.5" stroke="#131313" stroke-width="4"/><path d="M1744 1178.6l18.7 13.7" stroke-width="1.8"/>
<path d="M1784.4 1183.5l4.1 5.2M1789.3 1183.5l3.9 5.1 9.4-10.6M1792.6 1183.2l4.9-5" stroke-width="1.5"/>
<path d="M1884.5 1187.5v-5a5.8 5.8 0 0 1 11.6 0v5l1.8 2h-15.2z"/><path d="M1888.5 1191.5a2 2 0 0 0 3.6 0"/>
</g>

<rect x="430" y="1175" width="10.5" height="3.5" fill="#74cf6c"/><rect x="430" y="1188.5" width="10.5" height="3.5" fill="#74cf6c"/>
<path d="M292 1179.5v5.5" stroke="#131313" stroke-width="0"/>
</svg>
<svg class="abs" style="left:0;top:0;pointer-events:none" width="1919" height="1199" viewBox="0 0 1919 1199" font-family="Liberation Sans">
<text x="56.93" y="30.00" font-size="17.5" fill="#2c2a18" stroke="#2c2a18" stroke-width="0.22" textLength="27.58" lengthAdjust="spacingAndGlyphs">File</text>
<text x="104.63" y="30.00" font-size="17.5" fill="#2c2a18" stroke="#2c2a18" stroke-width="0.22" textLength="29.42" lengthAdjust="spacingAndGlyphs">Edit</text>
<text x="155.84" y="30.00" font-size="17.5" fill="#2c2a18" stroke="#2c2a18" stroke-width="0.22" textLength="70.65" lengthAdjust="spacingAndGlyphs">Selection</text>
<text x="248.30" y="30.00" font-size="17.5" fill="#2c2a18" stroke="#2c2a18" stroke-width="0.22" textLength="35.69" lengthAdjust="spacingAndGlyphs">View</text>
<text x="305.14" y="30.00" font-size="17.5" fill="#2c2a18" stroke="#2c2a18" stroke-width="0.22" textLength="22.94" lengthAdjust="spacingAndGlyphs">Go</text>
<text x="348.60" y="30.00" font-size="17.5" fill="#2c2a18" stroke="#2c2a18" stroke-width="0.22" textLength="32.13" lengthAdjust="spacingAndGlyphs">Run</text>
<text x="833.37" y="28.75" font-size="15.8" fill="#a0a0a0" stroke="#a0a0a0" stroke-width="0.22" textLength="240.66" lengthAdjust="spacingAndGlyphs">[React] - shinobiwps-blog ( main )</text>
<text x="1687.67" y="29.80" font-size="16.5" fill="#1e1e1e" stroke="#1e1e1e" stroke-width="0.22" textLength="19.58" lengthAdjust="spacingAndGlyphs">RE</text>
<text x="26.50" y="122.80" font-size="14.8" fill="#6e6e6e" stroke="#6e6e6e" stroke-width="0.22" textLength="68.00" lengthAdjust="spacingAndGlyphs">EXPLORER</text>
<text x="26.77" y="160.80" font-size="15.5" fill="#e9df6a" font-weight="bold" textLength="139.05" lengthAdjust="spacingAndGlyphs">SHINOBIWPS-BLOG</text>
<text x="26.42" y="1131.30" font-size="15.5" fill="#e9df6a" font-weight="bold" textLength="63.54" lengthAdjust="spacingAndGlyphs">OUTLINE</text>
<text x="26.59" y="1159.80" font-size="15.5" fill="#e9df6a" font-weight="bold" textLength="59.27" lengthAdjust="spacingAndGlyphs">STORIES</text>
<text x="387.07" y="78.00" font-size="17.2" fill="#f4f4f4" stroke="#f4f4f4" stroke-width="0.22" textLength="73.97" lengthAdjust="spacingAndGlyphs">layout.tsx</text>
<text x="817.78" y="77.50" font-size="17.2" fill="#f4f4f4" stroke="#f4f4f4" stroke-width="0.22" textLength="129.33" lengthAdjust="spacingAndGlyphs">keybindings.json</text>
<text x="342.27" y="115.80" font-size="17.4" fill="#9c9c9c" stroke="#9c9c9c" stroke-width="0.22" textLength="30.43" lengthAdjust="spacingAndGlyphs">app</text>
<text x="421.77" y="115.80" font-size="17.4" fill="#9c9c9c" stroke="#9c9c9c" stroke-width="0.22" textLength="74.48" lengthAdjust="spacingAndGlyphs">layout.tsx</text>
<text x="542.50" y="115.80" font-size="17.4" fill="#9c9c9c" stroke="#9c9c9c" stroke-width="0.22" textLength="109.06" lengthAdjust="spacingAndGlyphs">space_grotesk</text>
<text x="347.26" y="855.20" font-size="16" fill="#9c9c9e" stroke="#9c9c9e" stroke-width="0.22" textLength="44.34" lengthAdjust="spacingAndGlyphs">PORTS</text>
<text x="422.24" y="855.20" font-size="16" fill="#9c9c9e" stroke="#9c9c9e" stroke-width="0.22" textLength="73.58" lengthAdjust="spacingAndGlyphs">PROBLEMS</text>
<text x="526.82" y="855.20" font-size="16" fill="#9c9c9e" stroke="#9c9c9e" stroke-width="0.22" textLength="56.17" lengthAdjust="spacingAndGlyphs">OUTPUT</text>
<text x="614.34" y="855.20" font-size="16" fill="#9c9c9e" stroke="#9c9c9e" stroke-width="0.22" textLength="116.12" lengthAdjust="spacingAndGlyphs">DEBUG CONSOLE</text>
<text x="761.84" y="855.20" font-size="16" fill="#9c9c9e" stroke="#9c9c9e" stroke-width="0.22" textLength="56.30" lengthAdjust="spacingAndGlyphs">GITLENS</text>
<text x="849.71" y="855.20" font-size="16" fill="#9c9c9e" stroke="#9c9c9e" stroke-width="0.22" textLength="80.89" lengthAdjust="spacingAndGlyphs">COMMENTS</text>
<text x="962.22" y="855.20" font-size="16" fill="#e8de6b" stroke="#e8de6b" stroke-width="0.22" textLength="69.98" lengthAdjust="spacingAndGlyphs">TERMINAL</text>
<text x="1063.35" y="855.20" font-size="16" fill="#9c9c9e" stroke="#9c9c9e" stroke-width="0.22" textLength="56.04" lengthAdjust="spacingAndGlyphs">GITLENS</text>
<text x="1702.60" y="895.40" font-size="16.6" fill="#f2f2f2" stroke="#f2f2f2" stroke-width="0.22" textLength="25.01" lengthAdjust="spacingAndGlyphs">wsl</text>
<text x="1702.60" y="924.60" font-size="16.6" fill="#222222" stroke="#222222" stroke-width="0.22" textLength="25.01" lengthAdjust="spacingAndGlyphs">wsl</text>
<text x="76.33" y="1190.80" font-size="15.4" fill="#74cf6c" stroke="#74cf6c" stroke-width="0.22" textLength="42.64" lengthAdjust="spacingAndGlyphs">main*</text>
<text x="150.02" y="1190.80" font-size="15.4" fill="#74cf6c" stroke="#74cf6c" stroke-width="0.22" textLength="37.31" lengthAdjust="spacingAndGlyphs">6↓ 0↑</text>
<text x="268.29" y="1190.80" font-size="15.4" fill="#74cf6c" stroke="#74cf6c" stroke-width="0.22" textLength="9.85" lengthAdjust="spacingAndGlyphs">0</text>
<text x="304.57" y="1190.80" font-size="15.4" fill="#74cf6c" stroke="#74cf6c" stroke-width="0.22" textLength="10.08" lengthAdjust="spacingAndGlyphs">0</text>
<text x="335.50" y="1190.80" font-size="15.4" fill="#74cf6c" stroke="#74cf6c" stroke-width="0.22" textLength="69.54" lengthAdjust="spacingAndGlyphs">Git Graph</text>
<text x="448.47" y="1190.80" font-size="15.4" fill="#74cf6c" stroke="#74cf6c" stroke-width="0.22" textLength="100.01" lengthAdjust="spacingAndGlyphs">Blame Paused</text>
<text x="1031.30" y="1190.80" font-size="15.4" fill="#74cf6c" stroke="#74cf6c" stroke-width="0.22" textLength="244.98" lengthAdjust="spacingAndGlyphs">Alexandru Gherasim (3 weeks ago)</text>
<text x="1297.06" y="1190.80" font-size="15.4" fill="#74cf6c" stroke="#74cf6c" stroke-width="0.22" textLength="92.39" lengthAdjust="spacingAndGlyphs">Ln 17, Col 19</text>
<text x="1410.05" y="1190.80" font-size="15.4" fill="#74cf6c" stroke="#74cf6c" stroke-width="0.22" textLength="66.45" lengthAdjust="spacingAndGlyphs">Spaces: 2</text>
<text x="1497.07" y="1190.80" font-size="15.4" fill="#74cf6c" stroke="#74cf6c" stroke-width="0.22" textLength="43.59" lengthAdjust="spacingAndGlyphs">UTF-8</text>
<text x="1561.42" y="1190.80" font-size="15.4" fill="#74cf6c" stroke="#74cf6c" stroke-width="0.22" textLength="15.78" lengthAdjust="spacingAndGlyphs">LF</text>
<text x="1623.70" y="1190.80" font-size="15.4" fill="#74cf6c" stroke="#74cf6c" stroke-width="0.22" textLength="101.48" lengthAdjust="spacingAndGlyphs">TypeScript JSX</text>
<text x="1806.69" y="1190.80" font-size="15.4" fill="#74cf6c" stroke="#74cf6c" stroke-width="0.22" textLength="52.82" lengthAdjust="spacingAndGlyphs">Prettier</text>
</svg>
</body></html>
